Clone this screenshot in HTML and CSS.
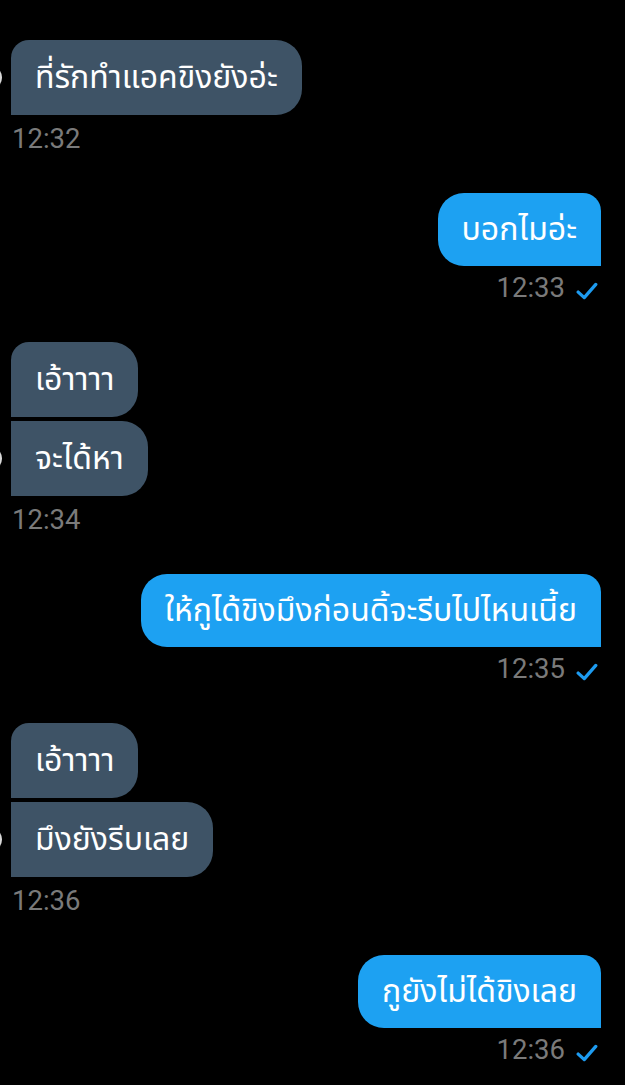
FILE: index.html
```html
<!DOCTYPE html>
<html lang="th">
<head>
    <meta charset="UTF-8">
    <meta name="viewport" content="width=device-width, initial-scale=1.0">
    <title>Chat</title>
    <link rel="stylesheet" href="styles.css">
</head>
<body>
    <div class="chat">
        <div class="group in">
            <div class="bubble first last">ที่รักทำแอคขิงยังอ่ะ<span class="avatar"></span></div>
            <div class="time">12:32</div>
        </div>

        <div class="group out">
            <div class="bubble">บอกไมอ่ะ</div>
            <div class="time">12:33 <svg class="check" viewBox="0 0 20 16"><path d="M2 9 L7.5 14 L18 2"/></svg></div>
        </div>

        <div class="group in">
            <div class="bubble first">เอ้าาาา</div>
            <div class="bubble last">จะได้หา<span class="avatar"></span></div>
            <div class="time">12:34</div>
        </div>

        <div class="group out">
            <div class="bubble">ให้กูได้ขิงมึงก่อนดิ้จะรีบไปไหนเนี้ย</div>
            <div class="time">12:35 <svg class="check" viewBox="0 0 20 16"><path d="M2 9 L7.5 14 L18 2"/></svg></div>
        </div>

        <div class="group in">
            <div class="bubble first">เอ้าาาา</div>
            <div class="bubble last">มึงยังรีบเลย<span class="avatar"></span></div>
            <div class="time">12:36</div>
        </div>

        <div class="group out">
            <div class="bubble">กูยังไม่ได้ขิงเลย</div>
            <div class="time">12:36 <svg class="check" viewBox="0 0 20 16"><path d="M2 9 L7.5 14 L18 2"/></svg></div>
        </div>
    </div>
</body>
</html>
```

FILE: styles.css
```css
body {
    margin: 0;
    background-color: #000;
    font-family: Roboto, "Noto Sans Thai", "Noto Sans", sans-serif;
    overflow: hidden;
}
.chat {
    display: flex;
    flex-direction: column;
    gap: 38px;
    padding: 40px 24px 0 11px;
}
.group {
    display: flex;
    flex-direction: column;
    gap: 4px;
}
.group.in {
    align-items: flex-start;
}
.group.out {
    align-items: flex-end;
}
.bubble {
    position: relative;
    padding: 0 24px;
    font-size: 32px;
    color: #fff;
    white-space: nowrap;
}
.in .bubble {
    line-height: 75px;
    background-color: #3e5366;
    border-radius: 0 26px 26px 0;
}
.in .bubble.first {
    border-top-left-radius: 18px;
}
.out .bubble {
    line-height: 73px;
    background-color: #1da1f2;
    border-radius: 26px 18px 0 26px;
}
.avatar {
    position: absolute;
    left: -34px;
    top: 25px;
    width: 25px;
    height: 25px;
    border-radius: 50%;
    background-color: #d8d8d8;
}
.time {
    display: flex;
    align-items: center;
    gap: 11px;
    font-size: 27.5px;
    line-height: 32px;
    color: #7a7a7a;
}
.in .time {
    margin-top: 4px;
    padding-left: 1px;
}
.out .time {
    margin-top: 2px;
    padding-right: 3px;
}
.check {
    width: 22px;
    height: 18px;
    margin-top: 6px;
    fill: none;
    stroke: #1d9bf0;
    stroke-width: 3;
    stroke-linecap: round;
    stroke-linejoin: round;
}
```
